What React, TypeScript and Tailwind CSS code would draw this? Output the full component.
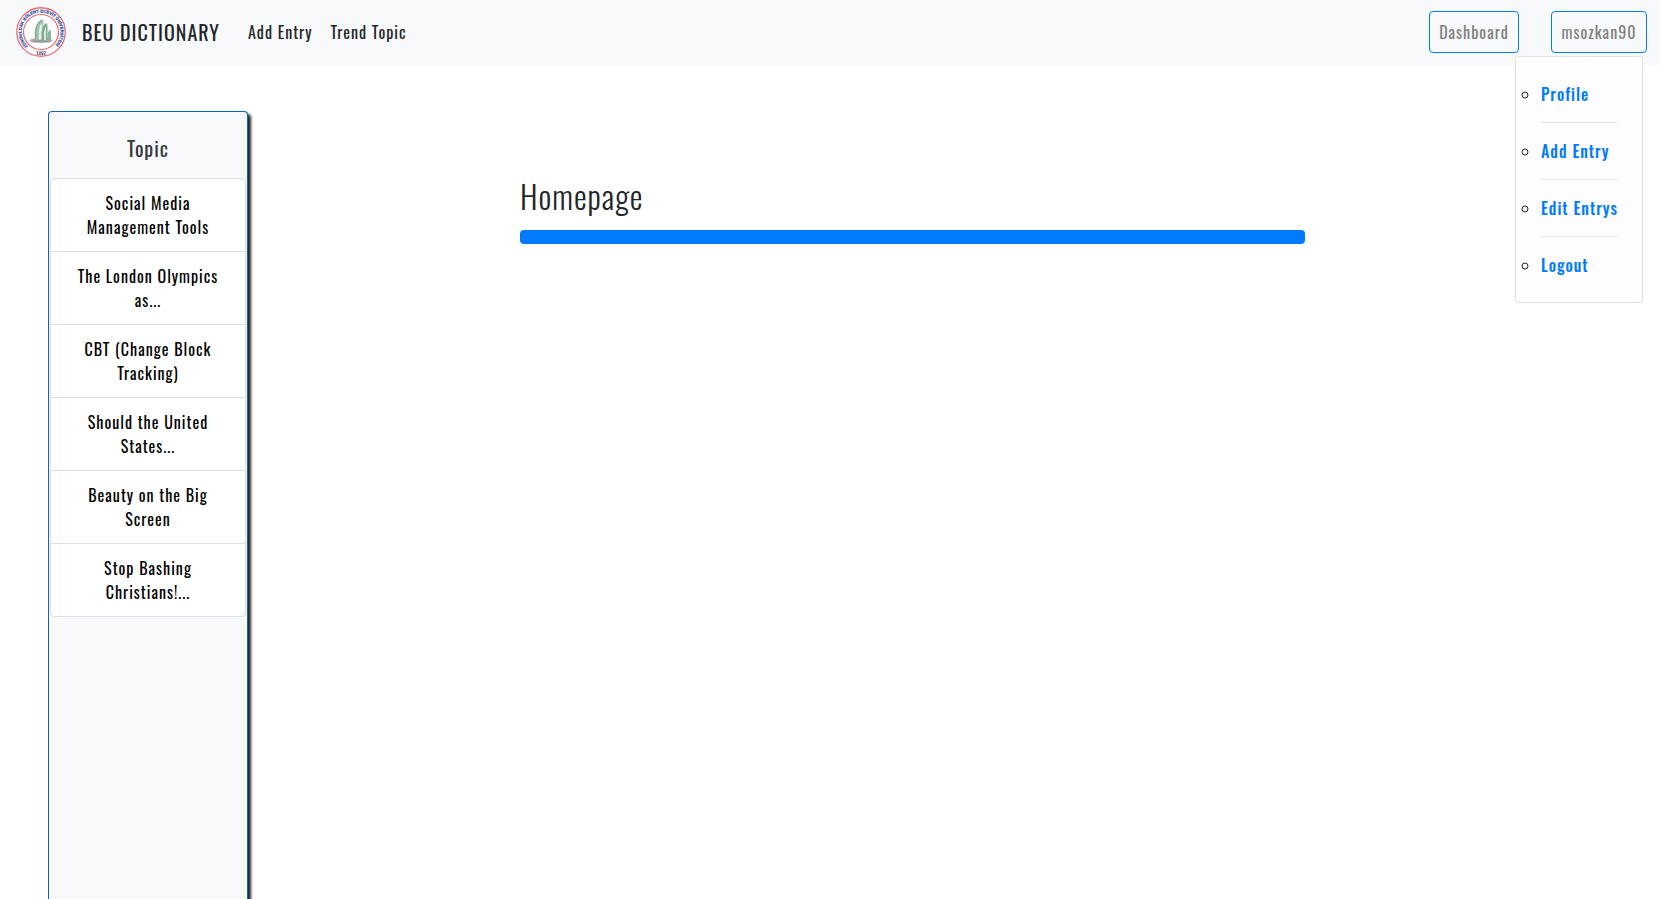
const topics = [
  'Social Media Management Tools',
  'The London Olympics as...',
  'CBT (Change Block Tracking)',
  'Should the United States...',
  'Beauty on the Big Screen',
  'Stop Bashing Christians!...',
];

const menu = ['Profile', 'Add Entry', 'Edit Entrys', 'Logout'];

function Logo() {
  return (
    <svg viewBox="0 0 100 100" className="size-[50px] tracking-normal" aria-hidden="true">
      <defs>
        <path id="ring" d="M24 79 A39 39 0 1 1 76 79" />
      </defs>
      <circle cx="50" cy="50" r="48.5" fill="#fff" stroke="#ee6a72" strokeWidth="2.6" />
      <circle cx="50" cy="50" r="35" fill="#fff" stroke="#ee6a72" strokeWidth="2.4" />
      <text fontSize="8.4" fontWeight="700" fill="#3455a8" stroke="#3455a8" strokeWidth="0.5" fontFamily="Liberation Sans, sans-serif">
        <textPath href="#ring">ZONGULDAK BÜLENT ECEVİT ÜNİVERSİTESİ</textPath>
      </text>
      <text x="50" y="95.5" fontSize="9" fontWeight="700" fill="#44447c" textAnchor="middle" fontFamily="Liberation Sans, sans-serif">
        1992
      </text>
      <ellipse cx="50" cy="67" rx="23" ry="5" fill="#a9abac" />
      <path d="M38 65V48Q40 31 53 24Q55 25 55 29V65Z" fill="#a5c6b2" />
      <path d="M39 65V48Q41 33 51 27" fill="none" stroke="#7ba58c" strokeWidth="2.5" />
      <path d="M46 65V46Q47 37 52 32V65Z" fill="#e6f0e9" />
      <path d="M51 66V50Q53 36 61 32Q63 34 63 38V66Z" fill="#7dab90" />
      <path d="M56 66V50Q57 43 60 39V66Z" fill="#dbe9df" />
      <path d="M63 66V55Q64 48 68 45Q70 47 70 50V66Z" fill="#8ab49b" />
      <path d="M33 70Q50 64 67 70" fill="none" stroke="#85898b" strokeWidth="1.5" />
    </svg>
  );
}

export default function App() {
  return (
    <div className="flex min-h-screen flex-col bg-white font-['Oswald','Roboto_Condensed','Liberation_Sans_Narrow','Liberation_Sans',sans-serif] text-base leading-6 tracking-[1px] text-[#212529]">
      <header className="flex h-[65px] items-center bg-[#f8f9fa] pr-[13px] pb-px pl-4">
        <a href="#" className="flex items-center gap-4 text-xl whitespace-nowrap">
          <Logo />
          BEU DICTIONARY
        </a>
        <nav className="ml-7 flex gap-[18px] whitespace-nowrap">
          <a href="#add">Add Entry</a>
          <a href="#trend">Trend Topic</a>
        </nav>
        <div className="ml-auto flex gap-8 text-[#808080]">
          <button type="button" className="h-[42px] w-[90px] rounded border border-[#007bff]">
            Dashboard
          </button>
          <div className="relative">
            <button type="button" aria-expanded="true" className="h-[42px] w-24 rounded border border-[#007bff]">
              msozkan90
            </button>
            <ul className="absolute top-full right-1 mt-[3px] w-32 list-[circle] rounded-[3px] border border-[#dee2e6] bg-[#fffdff] px-[25px] py-[9px] text-[#212529]">
              {menu.map((label, i) => (
                <li key={label}>
                  <a
                    href="#menu"
                    className={
                      i < menu.length - 1
                        ? 'block border-b border-[#e2e2e4] py-4 font-medium whitespace-nowrap text-[#007bff]'
                        : 'block py-4 font-medium whitespace-nowrap text-[#007bff]'
                    }
                  >
                    {label}
                  </a>
                </li>
              ))}
            </ul>
          </div>
        </div>
      </header>

      <div className="flex flex-1">
        <aside className="mt-[46px] ml-12 w-[200px] shrink-0 rounded-t border border-b-0 border-[#0b62c9] bg-[#f8f9fa] px-px text-center shadow-[3px_3px_3px_#222]">
          <h2 className="pt-6 pb-[18px] text-xl leading-6 text-[#343a40]">Topic</h2>
          <ul className="divide-y divide-[#dfdfdf] rounded border border-[#dfdfdf] bg-white text-black">
            {topics.map((topic) => (
              <li key={topic}>
                <a href="#topic" className="block px-5 py-3">
                  {topic}
                </a>
              </li>
            ))}
          </ul>
        </aside>
        <main className="flex-1 pt-[111px] pr-[355px] pl-[272px]">
          <h1 className="text-[32px] leading-10 font-light">Homepage</h1>
          <div className="mt-[14px] h-[14px] rounded bg-[#007bff]" />
        </main>
      </div>
    </div>
  );
}
